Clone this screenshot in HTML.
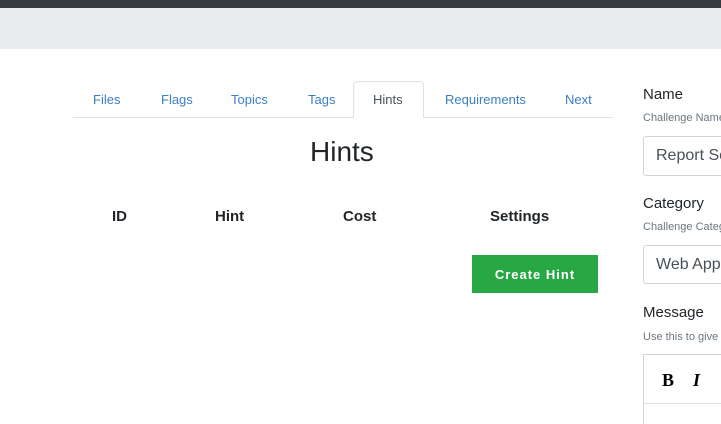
<!DOCTYPE html>
<html style="width:721px;height:424px;overflow:hidden"><head><meta charset="utf-8"><style>
*{margin:0;padding:0;box-sizing:border-box}
body{width:721px;height:424px;overflow:hidden;background:#fff;font-family:"Liberation Sans",sans-serif;position:relative}
.a{position:absolute;white-space:nowrap}
.tab{position:absolute;top:92px;font-size:13px;color:#3b7fc4}
.h{position:absolute;top:208px;font-size:15px;font-weight:bold;color:#212529}
</style></head><body>
<div class="a" style="left:0;top:0;width:721px;height:8px;background:#343a40"></div>
<div class="a" style="left:0;top:8px;width:721px;height:41px;background:#e9ecef"></div>
<div class="a" style="left:73px;top:117px;width:540px;height:1px;background:#dee2e6"></div>
<div class="a" style="left:353px;top:81px;width:71px;height:37px;border:1px solid #dee2e6;border-bottom:none;border-radius:4px 4px 0 0;background:#fff"></div>
<span class="tab" style="left:93px">Files</span>
<span class="tab" style="left:161px">Flags</span>
<span class="tab" style="left:231px">Topics</span>
<span class="tab" style="left:308px">Tags</span>
<span class="tab" style="left:373px;color:#495057">Hints</span>
<span class="tab" style="left:445px">Requirements</span>
<span class="tab" style="left:565px">Next</span>
<div class="a" style="left:310px;top:136px;font-size:28px;color:#212529">Hints</div>
<div class="h" style="left:112px">ID</div>
<div class="h" style="left:215px">Hint</div>
<div class="h" style="left:343px">Cost</div>
<div class="h" style="left:490px">Settings</div>
<div class="a" style="left:472px;top:255px;width:126px;height:38px;background:#28a745;color:#fff;font-size:13px;font-weight:bold;letter-spacing:1px;text-align:center;line-height:40px">Create Hint</div>
<div class="a" style="left:643px;top:86px;font-size:15px;color:#212529">Name</div>
<div class="a" style="left:643px;top:112px;font-size:11px;color:#6c757d">Challenge Name</div>
<div class="a" style="left:643px;top:136px;width:90px;height:40px;border:1px solid #ced4da;border-radius:3px;font-size:16px;color:#495057;padding:10px 12px">Report Sc</div>
<div class="a" style="left:643px;top:195px;font-size:15px;color:#212529">Category</div>
<div class="a" style="left:643px;top:221px;font-size:11px;color:#6c757d">Challenge Category</div>
<div class="a" style="left:643px;top:245px;width:90px;height:39px;border:1px solid #ced4da;border-radius:3px;font-size:16px;color:#495057;padding:10px 12px">Web App</div>
<div class="a" style="left:643px;top:304px;font-size:15px;color:#212529">Message</div>
<div class="a" style="left:643px;top:331px;font-size:11px;color:#6c757d">Use this to give</div>
<div class="a" style="left:643px;top:354px;width:90px;height:70px;border:1px solid #ced4da;border-bottom:none"></div>
<div class="a" style="left:643px;top:403px;width:90px;height:1px;background:#dee2e6"></div>
<div class="a" style="left:662px;top:370px;font-family:'Liberation Serif',serif;font-size:18px;font-weight:bold;color:#000">B</div>
<div class="a" style="left:693px;top:370px;font-family:'Liberation Serif',serif;font-size:18px;font-style:italic;font-weight:bold;color:#000">I</div>
</body></html>
